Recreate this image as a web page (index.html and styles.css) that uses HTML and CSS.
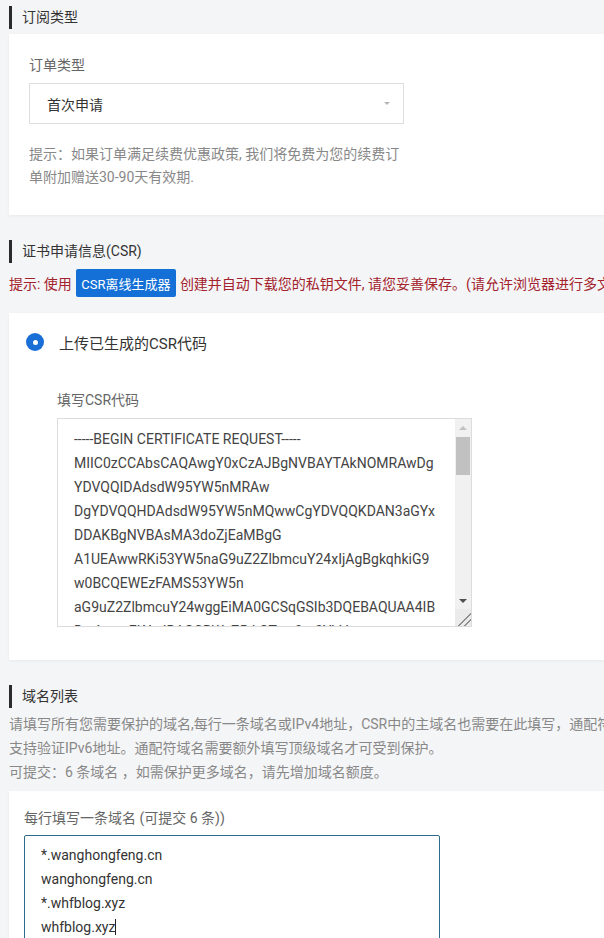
FILE: index.html
```html
<!DOCTYPE html>
<html lang="zh-CN">
<head>
<meta charset="utf-8">
<title>证书申请</title>
<link rel="stylesheet" href="styles.css">
</head>
<body>
<div class="page">
  <div class="sec-title first">订阅类型</div>
  <div class="card card-order">
    <div class="label">订单类型</div>
    <div class="select">
      <span>首次申请</span>
      <i class="arrow"></i>
    </div>
    <div class="hint">提示：如果订单满足续费优惠政策, 我们将免费为您的续费订<br>单附加赠送30-90天有效期.</div>
  </div>

  <div class="sec-title">证书申请信息(CSR)</div>
  <div class="warn">提示: 使用<button class="btn">CSR离线生成器</button>创建并自动下载您的私钥文件, 请您妥善保存。(请允许浏览器进行多文件下载)</div>
  <div class="card card-csr">
    <div class="radio-row">
      <span class="radio"></span>
      <span class="radio-text">上传已生成的CSR代码</span>
    </div>
    <div class="csr-field">
      <div class="label">填写CSR代码</div>
      <div class="csr-box">
        <textarea class="csr" spellcheck="false">-----BEGIN CERTIFICATE REQUEST-----
MIIC0zCCAbsCAQAwgY0xCzAJBgNVBAYTAkNOMRAwDg
YDVQQIDAdsdW95YW5nMRAw
DgYDVQQHDAdsdW95YW5nMQwwCgYDVQQKDAN3aGYx
DDAKBgNVBAsMA3doZjEaMBgG
A1UEAwwRKi53YW5naG9uZ2ZlbmcuY24xIjAgBgkqhkiG9
w0BCQEWEzFAMS53YW5n
aG9uZ2ZlbmcuY24wggEiMA0GCSqGSIb3DQEBAQUAA4IB
DwAwggEKAoIBAQCRWxZ5rkOTwq9m3YbV
p7Xw0nZr1mE3kQ2cU8hT5aLfJ9vB6sR4dG
yH2oN7wK1tP5qZ3xA8cM0rV6uE9jL4bS2f
D7gW1nY3kX5mT0qP8hR2vC6aJ4eZ9sB1o
LkU3wN7tQ5yG0pF2xH8cR4mV6dA9jS1bE
-----END CERTIFICATE REQUEST-----</textarea>
        <div class="vscroll" aria-hidden="true">
          <div class="sb-btn sb-up"></div>
          <div class="sb-track"><div class="sb-thumb"></div></div>
          <div class="sb-btn sb-down"></div>
          <div class="sb-corner"></div>
        </div>
      </div>
    </div>
  </div>

  <div class="sec-title">域名列表</div>
  <div class="desc">
    <div>请填写所有您需要保护的域名,每行一条域名或IPv4地址，CSR中的主域名也需要在此填写，通配符证书不</div>
    <div>支持验证IPv6地址。通配符域名需要额外填写顶级域名才可受到保护。</div>
    <div>可提交：6 条域名 ，如需保护更多域名，请先增加域名额度。</div>
  </div>
  <div class="card card-domain">
    <div class="label">每行填写一条域名 (可提交 6 条))</div>
    <div class="domains" role="textbox" aria-multiline="true">
      <div>*.wanghongfeng.cn</div>
      <div>wanghongfeng.cn</div>
      <div>*.whfblog.xyz</div>
      <div>whfblog.xyz<span class="caret"></span></div>
    </div>
  </div>
</div>
</body>
</html>
```

FILE: styles.css
```css
html, body {
  margin: 0;
  padding: 0;
  overflow: hidden;
  height: 100%;
}

body {
  background: #f4f5f7;
  font-family: Roboto, "Noto Sans CJK SC", sans-serif;
  font-size: 14px;
  color: #333;
}

.page {
  width: 1100px;
  padding-left: 9px;
  padding-top: 6px;
}

.sec-title {
  height: 23px;
  line-height: 23px;
  border-left: 3px solid #2b2b2b;
  padding-left: 10px;
  font-size: 14px;
  color: #333;
  margin-top: 25px;
}

.sec-title.first {
  margin-top: 0;
}

.card {
  background: #fff;
  box-shadow: 0 1px 3px rgba(0, 0, 0, 0.05);
}

.label {
  font-size: 14px;
  line-height: 22px;
  color: #666;
  margin-bottom: 7px;
}

.card-order {
  margin-top: 5px;
  padding: 20px 20px 26px 20px;
}

.select {
  width: 375px;
  height: 41px;
  box-sizing: border-box;
  border: 1px solid #dedede;
  display: flex;
  align-items: center;
  justify-content: space-between;
  padding: 0 13px 0 17px;
  color: #333;
}

.arrow {
  width: 0;
  height: 0;
  border-left: 3px solid transparent;
  border-right: 3px solid transparent;
  border-top: 3px solid #b5b5b5;
}

.hint {
  margin-top: 19px;
  line-height: 23px;
  color: #888;
  white-space: nowrap;
}

.warn {
  margin-top: 6px;
  height: 28px;
  display: flex;
  align-items: center;
  white-space: nowrap;
  color: #a3222c;
}

.btn {
  width: 100px;
  height: 28px;
  margin: 0 4px;
  padding: 0;
  border: 0;
  border-radius: 2px;
  background: #1470d6;
  color: #fff;
  font-family: Roboto, "Noto Sans CJK SC", sans-serif;
  font-size: 13px;
  cursor: pointer;
}

.card-csr {
  margin-top: 16px;
  padding: 18px 17px 33px 17px;
}

.radio-row {
  display: flex;
  align-items: center;
  height: 22px;
}

.radio {
  width: 18px;
  height: 18px;
  border-radius: 50%;
  background: #1a6fd6;
  display: flex;
  align-items: center;
  justify-content: center;
}

.radio::after {
  content: "";
  width: 5px;
  height: 5px;
  border-radius: 50%;
  background: #fff;
}

.radio-text {
  margin-left: 15px;
  font-size: 15px;
  color: #333;
}

.csr-field {
  margin-top: 36px;
  padding-left: 31px;
}

.csr-box {
  display: flex;
  width: 415px;
  height: 209px;
  box-sizing: border-box;
  border: 1px solid #dcdcdc;
  background: #fff;
}

.csr {
  flex: 1;
  min-width: 0;
  border: 0;
  padding: 8px 16px 0 16px;
  margin: 0;
  font-family: Roboto, "Noto Sans CJK SC", sans-serif;
  font-size: 14px;
  line-height: 24px;
  color: #444;
  white-space: pre;
  overflow: hidden;
  resize: none;
  outline: none;
  background: transparent;
}

.vscroll {
  width: 16px;
  display: flex;
  flex-direction: column;
  background: #f1f1f1;
}

.sb-btn {
  height: 17px;
  display: flex;
  align-items: center;
  justify-content: center;
}

.sb-up::before {
  content: "";
  border-left: 4px solid transparent;
  border-right: 4px solid transparent;
  border-bottom: 4px solid #c2c2c2;
}

.sb-down::before {
  content: "";
  border-left: 4px solid transparent;
  border-right: 4px solid transparent;
  border-top: 4px solid #505050;
}

.sb-track {
  flex: 1;
  padding: 1px 1px 0 1px;
}

.sb-thumb {
  height: 38px;
  background: #c1c1c1;
}

.sb-corner {
  height: 17px;
  background:
    linear-gradient(135deg, transparent 0 60%, #8e8e8e 60% 65%, transparent 65% 77%, #8e8e8e 77% 82%, transparent 82%),
    #ebebeb;
}

.desc {
  margin-top: 4px;
  line-height: 24px;
  color: #888;
  white-space: nowrap;
}

.card-domain {
  margin-top: 7px;
  padding: 16px 15px 20px 15px;
}

.card-domain .label {
  margin-bottom: 6px;
}

.domains {
  width: 416px;
  height: 150px;
  box-sizing: border-box;
  border: 1px solid #2d6b8c;
  border-radius: 2px;
  padding: 7px 16px;
  line-height: 24px;
  color: #333;
  font-size: 14px;
}

.caret {
  display: inline-block;
  width: 1px;
  height: 16px;
  background: #222;
  vertical-align: -3px;
}
```
